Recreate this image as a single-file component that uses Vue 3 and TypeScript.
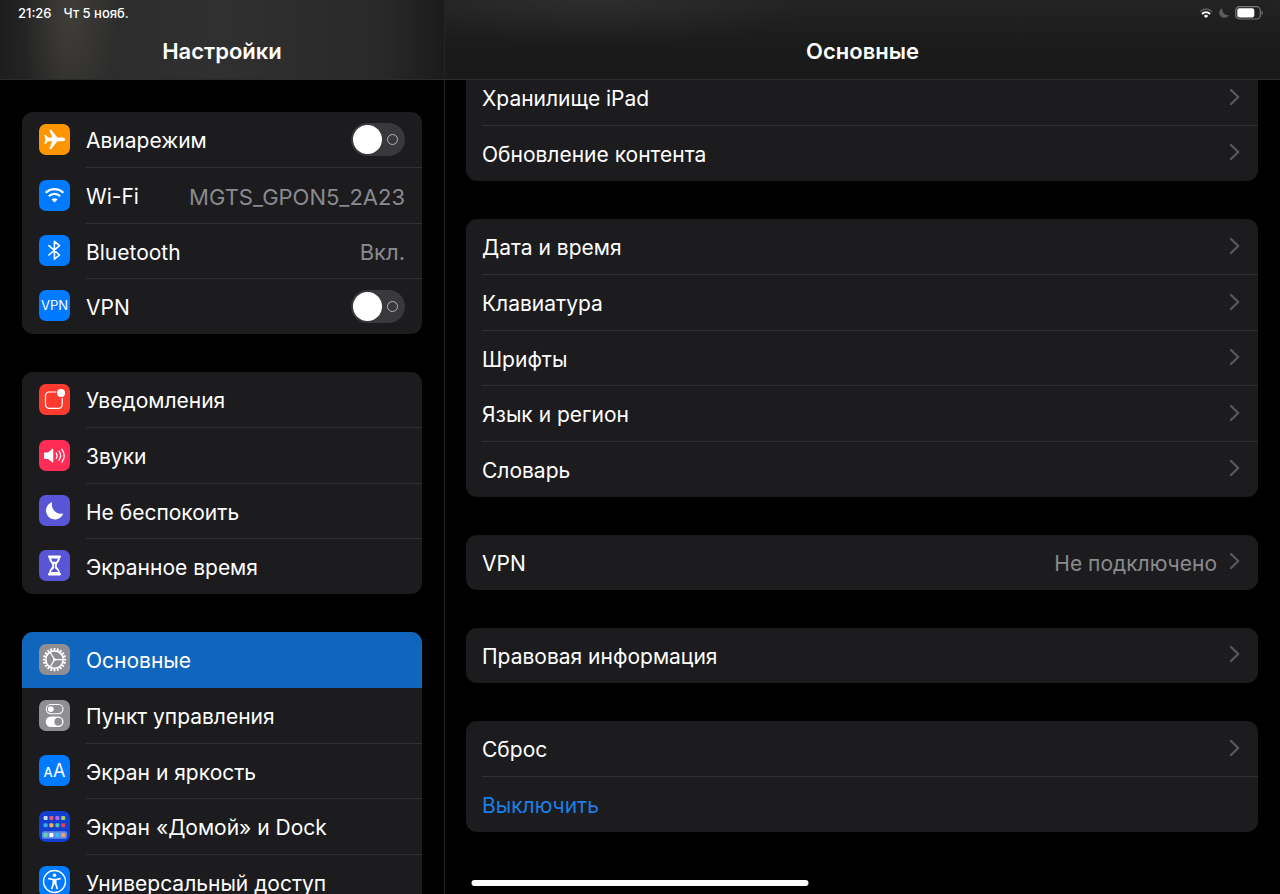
<script setup lang="ts">
import { computed, reactive, ref } from 'vue'

type IconName =
  | 'airplane' | 'wifi' | 'bluetooth' | 'vpn'
  | 'notifications' | 'sounds' | 'moon' | 'hourglass'
  | 'gear' | 'control' | 'display' | 'home' | 'accessibility'

interface SidebarItem {
  id: string
  label: string
  icon: IconName
  value?: string
  toggle?: boolean
}

interface DetailItem {
  label: string
  value?: string
  action?: boolean
}

const sidebarGroups: SidebarItem[][] = [
  [
    { id: 'airplane', label: 'Авиарежим', icon: 'airplane', toggle: true },
    { id: 'wifi', label: 'Wi-Fi', icon: 'wifi', value: 'MGTS_GPON5_2A23' },
    { id: 'bluetooth', label: 'Bluetooth', icon: 'bluetooth', value: 'Вкл.' },
    { id: 'vpn', label: 'VPN', icon: 'vpn', toggle: true },
  ],
  [
    { id: 'notifications', label: 'Уведомления', icon: 'notifications' },
    { id: 'sounds', label: 'Звуки', icon: 'sounds' },
    { id: 'dnd', label: 'Не беспокоить', icon: 'moon' },
    { id: 'screentime', label: 'Экранное время', icon: 'hourglass' },
  ],
  [
    { id: 'general', label: 'Основные', icon: 'gear' },
    { id: 'control', label: 'Пункт управления', icon: 'control' },
    { id: 'display', label: 'Экран и яркость', icon: 'display' },
    { id: 'home', label: 'Экран «Домой» и Dock', icon: 'home' },
    { id: 'accessibility', label: 'Универсальный доступ', icon: 'accessibility' },
  ],
]

const detailGroups: DetailItem[][] = [
  [{ label: 'Хранилище iPad' }, { label: 'Обновление контента' }],
  [
    { label: 'Дата и время' },
    { label: 'Клавиатура' },
    { label: 'Шрифты' },
    { label: 'Язык и регион' },
    { label: 'Словарь' },
  ],
  [{ label: 'VPN', value: 'Не подключено' }],
  [{ label: 'Правовая информация' }],
  [{ label: 'Сброс' }, { label: 'Выключить', action: true }],
]

const selected = ref('general')
const toggles = reactive<Record<string, boolean>>({ airplane: false, vpn: false })

const gearTeeth = computed(() => Array.from({ length: 20 }, (_, i) => i * 18))

const homeTiles = [
  { x: 4.6, y: 5, c: '#c9dcfa' }, { x: 10.4, y: 5, c: '#f0567a' }, { x: 16.4, y: 5, c: '#b366e8' }, { x: 22.2, y: 5, c: '#9fd46a' },
  { x: 4.6, y: 12.3, c: '#35aef0' }, { x: 10.4, y: 12.3, c: '#f2b244' }, { x: 16.4, y: 12.3, c: '#4fc3b5' }, { x: 22.2, y: 12.3, c: '#e0405a' },
  { x: 4.6, y: 22, c: '#63d6a4' }, { x: 10.4, y: 22, c: '#ffffff' }, { x: 16.4, y: 22, c: '#37b6f5' }, { x: 22.2, y: 22, c: '#f09a78' },
]
</script>

<template>
  <div class="screen">
    <aside class="pane sidebar">
      <header class="bar bar-left">
        <div class="status">
          <span>21:26</span>
          <span>Чт 5 нояб.</span>
        </div>
        <h1 class="title">Настройки</h1>
      </header>

      <nav class="scroll side-scroll">
        <ul v-for="(group, gi) in sidebarGroups" :key="gi" class="card">
          <li v-for="item in group" :key="item.id" class="item">
            <component
              :is="item.toggle ? 'label' : 'button'"
              class="row side-row"
              :class="{ selected: selected === item.id }"
              :for="item.toggle ? 'toggle-' + item.id : undefined"
              :type="item.toggle ? undefined : 'button'"
              @click="!item.toggle && (selected = item.id)"
            >
              <svg class="icon" :class="'icon-' + item.icon" viewBox="0 0 31 31" aria-hidden="true">
                <template v-if="item.icon === 'airplane'">
                  <path fill="#fff" d="M26.2 15.4c0-1.2-1.7-1.9-3.2-1.9h-4.6L12.7 6.4c-.4-.5-.8-.6-1.3-.6h-1.2l3 7.7H9L6.9 11H5.2l1.3 4.4-1.3 4.4h1.7L9 17.3h4.2l-3 7.7h1.2c.5 0 .9-.1 1.3-.6l5.7-7.1H23c1.5 0 3.2-.7 3.2-1.9z" />
                </template>
                <template v-else-if="item.icon === 'wifi'">
                  <g fill="none" stroke="#fff" stroke-width="2.2">
                    <path d="M6.7 12.8a12.4 12.4 0 0 1 17.6 0" />
                    <path d="M9.9 16.3a7.9 7.9 0 0 1 11.2 0" />
                  </g>
                  <path fill="#fff" d="M15.5 22.4l-3-3a4.2 4.2 0 0 1 6 0z" />
                </template>
                <template v-else-if="item.icon === 'bluetooth'">
                  <path fill="none" stroke="#fff" stroke-width="1.6" stroke-linejoin="round" stroke-linecap="round" d="M9.9 10.7l10.6 9.3-5.1 4.2V6.3l5.1 4.4L9.9 20" />
                </template>
                <template v-else-if="item.icon === 'vpn'">
                  <text x="15.5" y="20" text-anchor="middle" font-size="13" fill="#fff">VPN</text>
                </template>
                <template v-else-if="item.icon === 'notifications'">
                  <path fill="none" stroke="#fff" stroke-width="1.2" stroke-linecap="round" d="M16.8 8H10.2a3.7 3.7 0 0 0-3.7 3.7v8.9a3.7 3.7 0 0 0 3.7 3.7h9.3a3.7 3.7 0 0 0 3.7-3.7v-6.3" />
                  <circle cx="22" cy="9" r="4" fill="#fff" />
                </template>
                <template v-else-if="item.icon === 'sounds'">
                  <path fill="#fff" d="M5.8 12.4h3.3l4-3.3c.6-.5 1.2-.3 1.2.5v12.2c0 .8-.6 1-1.2.5l-4-3.3H5.8c-.5 0-.8-.3-.8-.8v-5c0-.5.3-.8.8-.8z" />
                  <g fill="none" stroke="#fff" stroke-width="1.3" stroke-linecap="round">
                    <path d="M17.2 13.1a4.4 4.4 0 0 1 0 5.2" />
                    <path d="M20 11.2a7.6 7.6 0 0 1 0 9" />
                    <path d="M22.9 9.3a11 11 0 0 1 0 12.8" />
                  </g>
                </template>
                <template v-else-if="item.icon === 'moon'">
                  <path fill="#fff" d="M13.2 7.1a9.3 9.3 0 0 0 11.1 11.5A8.9 8.9 0 1 1 13.2 7.1z" />
                </template>
                <template v-else-if="item.icon === 'hourglass'">
                  <path fill="#fff" d="M10.2 5.6h10.6c.7 0 1.2.5 1.2 1.2s-.4 1.2-1.1 1.2c0 3.8-3.2 5-3.2 7.6s3.2 3.7 3.2 7.5c.7 0 1.1.5 1.1 1.2s-.5 1.3-1.2 1.3H10.2c-.7 0-1.2-.6-1.2-1.3s.4-1.2 1.1-1.2c0-3.8 3.2-4.9 3.2-7.5s-3.2-3.8-3.2-7.6C9.4 8 9 7.5 9 6.8s.5-1.2 1.2-1.2z" />
                  <path fill="#5856d6" d="M12.2 8.6h6.6c-.2 1.3-.7 2.2-1.4 3.2h-3.8c-.7-1-1.2-1.9-1.4-3.2zM15.1 14h.8v4.2l2.2 1.9c.6.6.9 1.2.9 2H12c0-.8.3-1.4.9-2l2.2-1.9z" />
                </template>
                <template v-else-if="item.icon === 'gear'">
                  <g stroke="#fff" stroke-width="1.9">
                    <line v-for="a in gearTeeth" :key="a" x1="15.5" y1="3.9" x2="15.5" y2="7" :transform="`rotate(${a} 15.5 15.6)`" />
                  </g>
                  <circle cx="15.5" cy="15.6" r="8.6" fill="none" stroke="#fff" stroke-width="1.5" />
                  <path fill="none" stroke="#fff" stroke-width="1.2" d="M15.5 15.6H24M15.5 15.6L11.2 8.2M15.5 15.6L11.2 23" />
                  <circle cx="15.5" cy="15.6" r="1.5" fill="#fff" />
                </template>
                <template v-else-if="item.icon === 'control'">
                  <rect x="7.2" y="4.5" width="16.8" height="9.2" rx="4.6" fill="none" stroke="#fff" stroke-width="1.1" />
                  <circle cx="11.8" cy="9.1" r="2.9" fill="#fff" />
                  <rect x="6.7" y="16.5" width="17.8" height="10.4" rx="5.2" fill="#fff" />
                  <circle cx="19.3" cy="21.7" r="3.9" fill="#8e8e93" />
                </template>
                <template v-else-if="item.icon === 'display'">
                  <text x="4.5" y="21.5" font-size="13" font-weight="500" fill="#fff">A</text>
                  <text x="14" y="21.5" font-size="18" fill="#fff">A</text>
                </template>
                <template v-else-if="item.icon === 'home'">
                  <rect x="3" y="20.3" width="25" height="7.4" rx="2" fill="#5f8be8" />
                  <rect v-for="(t, ti) in homeTiles" :key="ti" :x="t.x" :y="t.y" width="4" height="4" rx="1" :fill="t.c" />
                </template>
                <template v-else>
                  <circle cx="15.5" cy="15.5" r="11" fill="none" stroke="#fff" stroke-width="1.3" />
                  <circle cx="15.5" cy="9.2" r="1.8" fill="#fff" />
                  <path fill="none" stroke="#fff" stroke-width="1.7" stroke-linecap="round" stroke-linejoin="round" d="M9.9 12.6l4.1.9h3l4.100-.9M14.300 13.700v4l-1.500 4.800M16.700 13.700v4l1.500 4.800M15.500 13.700v4" />
                </template>
              </svg>
              <span class="body">
                <span class="label">{{ item.label }}</span>
                <span v-if="item.value" class="value">{{ item.value }}</span>
                <input
                  v-if="item.toggle"
                  :id="'toggle-' + item.id"
                  v-model="toggles[item.id]"
                  class="switch"
                  type="checkbox"
                  role="switch"
                />
              </span>
            </component>
          </li>
        </ul>
      </nav>
    </aside>

    <main class="pane">
      <header class="bar bar-right">
        <div class="status status-icons">
          <svg width="14" height="10" viewBox="0 0 14 10" aria-hidden="true">
            <path fill="none" stroke="#5c5c5e" stroke-width="1.6" d="M.9 3.7a8.6 8.6 0 0 1 12.2 0" />
            <path fill="none" stroke="#fff" stroke-width="2" d="M3 6a5.7 5.7 0 0 1 8 0" />
            <path fill="#fff" d="M7 10L4.8 7.9a3.1 3.1 0 0 1 4.4 0z" />
          </svg>
          <svg width="10" height="10" viewBox="0 0 10 10" aria-hidden="true">
            <path fill="#5c5c5e" d="M3.4 0a5.5 5.5 0 0 0 6.5 6.9A5.1 5.1 0 1 1 3.4 0z" />
          </svg>
          <svg width="29" height="14" viewBox="0 0 29 14" aria-hidden="true">
            <rect x=".7" y=".7" width="24.6" height="12.3" rx="3.8" fill="none" stroke="#79797b" stroke-width="1.2" />
            <rect x="2.3" y="2.3" width="17" height="9.1" rx="2.2" fill="#fff" />
            <path fill="#79797b" d="M26.6 4.8c1.6.5 1.6 3.7 0 4.2z" />
          </svg>
        </div>
        <h2 class="title">Основные</h2>
      </header>

      <div class="scroll detail-scroll">
        <ul v-for="(group, gi) in detailGroups" :key="gi" class="card">
          <li v-for="item in group" :key="item.label" class="item">
            <button type="button" class="row detail-row">
              <span class="body">
                <span class="label" :class="{ action: item.action }">{{ item.label }}</span>
                <span v-if="item.value" class="value">{{ item.value }}</span>
                <svg v-if="!item.action" class="chevron" viewBox="0 0 11 18" aria-hidden="true">
                  <path fill="none" stroke="#58585c" stroke-width="2.4" stroke-linecap="round" stroke-linejoin="round" d="M2 2l7.2 7L2 16" />
                </svg>
              </span>
            </button>
          </li>
        </ul>
      </div>
    </main>

    <div class="home-indicator"></div>
  </div>
</template>

<style>
body {
  background: #000;
}
</style>

<style scoped>
.screen {
  position: relative;
  display: grid;
  grid-template-columns: minmax(0, 445fr) minmax(0, 835fr);
  height: 100vh;
  overflow: hidden;
  background: #000;
  color: #fff;
  font-family: Inter, "Noto Sans", "Liberation Sans", sans-serif;
  font-size: 21px;
}

.pane {
  display: flex;
  flex-direction: column;
  min-width: 0;
  min-height: 0;
}

.sidebar {
  border-right: 1px solid #242426;
}

.bar {
  flex: none;
  box-sizing: border-box;
  height: 80px;
  border-bottom: 1px solid #2b2b2c;
}

.bar-left {
  background:
    radial-gradient(ellipse 48px 110px at 70px 16px, rgba(84, 80, 70, 0.5), transparent),
    linear-gradient(90deg, #1e1e1e 0, #2b2b2b 60px, #303030 50%, #292929 86%, #1b1b1b 100%);
}

.bar-right {
  background:
    radial-gradient(ellipse 220px 46px at 150px 0, rgba(70, 70, 70, 0.3), transparent),
    linear-gradient(180deg, #232323 0, #1a1a1a 60%, #1a1a1a 100%);
}

.status {
  display: flex;
  align-items: center;
  gap: 12px;
  height: 26px;
  padding: 0 18px;
  font-size: 13px;
  font-weight: 500;
}

.status-icons {
  justify-content: flex-end;
  gap: 6px;
  padding-right: 16px;
}

.title {
  margin: 0;
  font-size: 22px;
  font-weight: 600;
  line-height: 50px;
  text-align: center;
}

.scroll {
  flex: 1;
  min-height: 0;
  overflow-y: auto;
  scrollbar-width: none;
  display: flex;
  flex-direction: column;
  gap: 38px;
}

.side-scroll {
  padding: 32px 22px;
}

.detail-scroll {
  padding: 0 22px 0 21px;
}

.detail-scroll .card:first-child {
  margin-top: -10px;
}

.card {
  flex: none;
  margin: 0;
  padding: 0;
  list-style: none;
  overflow: hidden;
  border-radius: 11px;
  background: #1c1c1e;
}

.item {
  display: flex;
  height: 56px;
}

.item:nth-child(3n),
.item:last-child {
  height: 55px;
}

.row {
  display: flex;
  flex: 1;
  align-items: center;
  min-width: 0;
  margin: 0;
  border: 0;
  background: none;
  color: inherit;
  font: inherit;
  text-align: left;
  cursor: pointer;
}

.side-row {
  gap: 16px;
  padding: 0 0 0 17px;
}

.detail-row {
  padding: 0 0 0 16px;
}

.selected {
  background: #1065bd;
}

.body {
  display: flex;
  flex: 1;
  align-items: center;
  align-self: stretch;
  min-width: 0;
  padding-right: 17px;
  border-bottom: 1px solid #2f2f32;
}

.detail-row .body {
  padding-right: 18px;
}

.item:last-child .body,
.selected .body {
  border-bottom-color: transparent;
}

.label,
.value {
  padding-top: 2px;
  white-space: nowrap;
}

.label {
  flex: 1;
  min-width: 0;
}

.action {
  color: #1a7fe8;
}

.value {
  color: #8a8a8f;
}

.side-row .value {
  font-size: 22px;
}

.icon {
  flex: none;
  width: 31px;
  height: 31px;
  margin-bottom: 2px;
  border-radius: 7px;
  background: #007aff;
}

.icon-airplane {
  background: #ff9500;
}

.icon-notifications {
  background: #ff3b30;
}

.icon-sounds {
  background: #ff2d55;
}

.icon-moon,
.icon-hourglass {
  background: #5856d6;
}

.icon-gear,
.icon-control {
  background: #8e8e93;
}

.icon-home {
  background: #123fd0;
}

.chevron {
  flex: none;
  width: 11px;
  height: 18px;
  margin-bottom: 2px;
  margin-left: 12px;
}

.switch {
  position: relative;
  flex: none;
  width: 54px;
  height: 33px;
  margin: 0;
  border-radius: 17px;
  appearance: none;
  background: #39393d;
  cursor: pointer;
}

.switch::before {
  content: "";
  position: absolute;
  top: 2px;
  left: 2px;
  width: 29px;
  height: 29px;
  border-radius: 50%;
  background: #fff;
}

.switch::after {
  content: "";
  position: absolute;
  top: 11px;
  right: 7px;
  box-sizing: border-box;
  width: 11px;
  height: 11px;
  border: 1px solid #b4b4b8;
  border-radius: 50%;
}

.switch:checked {
  background: #30d158;
}

.switch:checked::before {
  left: 23px;
}

.switch:checked::after {
  display: none;
}

.home-indicator {
  position: absolute;
  bottom: 8px;
  left: 50%;
  width: 337px;
  height: 6px;
  border-radius: 3px;
  background: #fff;
  transform: translateX(-50%);
}
</style>
